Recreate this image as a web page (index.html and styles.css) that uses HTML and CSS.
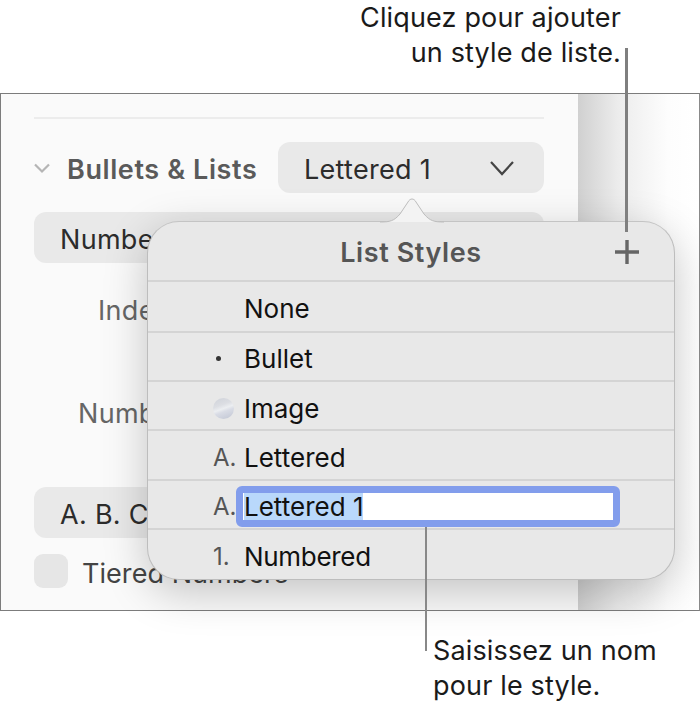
FILE: index.html
```html
<!DOCTYPE html>
<html lang="fr">
<head>
<meta charset="utf-8">
<title>List Styles</title>
<link rel="stylesheet" href="styles.css">
</head>
<body>
<div class="stage">
  <div class="top-caption">Cliquez pour ajouter<br>un style de liste.</div>
  <div class="window">
    <div class="panel">
      <div class="divider"></div>
      <div class="section-row">
        <svg class="disclosure" width="18" height="12" viewBox="0 0 18 12"><path d="M2 2.5 9 9.5 16 2.5" fill="none" stroke="#b5b5b5" stroke-width="2.2"/></svg>
        <span class="section-title">Bullets &amp; Lists</span>
        <div class="select style-select">
          <span>Lettered 1</span>
          <svg width="26" height="16" viewBox="0 0 26 16"><path d="M2 2 13 14 24 2" fill="none" stroke="#444" stroke-width="2.2"/></svg>
        </div>
      </div>
      <div class="select wide number-select"><span>Numbers</span></div>
      <div class="label indent-label">Indent</div>
      <div class="label number-label">Number</div>
      <div class="select wide format-select"><span>A. B. C.</span></div>
      <div class="check-row">
        <span class="checkbox"></span>
        <span class="check-text">Tiered Numbers</span>
      </div>
    </div>
    <div class="backdrop"></div>
  </div>
  <div class="bottom-caption">Saisissez un nom<br>pour le style.</div>

  <div class="popover">
    <svg class="arrow" width="64" height="26" viewBox="0 0 64 26"><path d="M0 25C10 25 14 24 20 17L28 5C30 1 34 1 36 5L44 17C50 24 54 25 64 25" fill="#f3f3f3" stroke="#bdbdbd" stroke-width="1"/></svg>
    <div class="pop-head">
      <span class="pop-title">List Styles</span>
      <svg class="plus" width="26" height="26" viewBox="0 0 26 26"><path d="M13 1V25M1 13H25" stroke="#666" stroke-width="3.4"/></svg>
    </div>
    <div class="pop-row first"><span class="mark"></span><span class="name">None</span></div>
    <div class="pop-row"><span class="mark"><span class="dot"></span></span><span class="name">Bullet</span></div>
    <div class="pop-row"><span class="mark"><span class="ball"></span></span><span class="name">Image</span></div>
    <div class="pop-row"><span class="mark">A.</span><span class="name">Lettered</span></div>
    <div class="pop-row"><span class="mark">A.</span><div class="field"><span class="selected">Lettered 1</span></div></div>
    <div class="pop-row"><span class="mark">1.</span><span class="name tight">Numbered</span></div>
  </div>
  <div class="leader leader-top"></div>
  <div class="leader leader-bottom"></div>
</div>
</body>
</html>
```
FILE: styles.css
```css
* { box-sizing: border-box; }
html, body { margin: 0; padding: 0; background: #fff; }
body { font-family: Inter, "Liberation Sans", sans-serif; color: #1d1d1f; }
.stage { position: relative; width: 700px; height: 702px; overflow: hidden; }

.top-caption { height: 93px; padding: 0 79px 0 0; text-align: right; font-size: 27px; line-height: 35px; color: #1a1a1a; letter-spacing: 0.15px; }
.bottom-caption { padding: 22px 0 0 433px; font-size: 27px; line-height: 35px; color: #1a1a1a; letter-spacing: 0.15px; }

.window { display: flex; height: 518px; border: 1px solid #7c7c7c; border-right-color: #8a8a8a; }
.panel { width: 577px; background: #fafafa; padding: 23px 34px 0 33px; }
.backdrop { flex: 1; background: linear-gradient(90deg, #d0d0d0 0, #ececec 40px, #fdfdfd 90px, #fff 100%); }

.divider { height: 2px; background: #ececec; }
.section-row { display: flex; align-items: center; margin-top: 23px; height: 51px; }
.disclosure { margin-left: -1px; flex: none; }
.section-title { margin-left: 16px; padding-top: 3px; font-size: 27px; font-weight: 600; color: #5a5a5a; white-space: nowrap; letter-spacing: 0.6px; }
.select { display: flex; align-items: center; background: #e9e9e9; border-radius: 12px; height: 51px; font-size: 27px; letter-spacing: 0.3px; color: #2c2c2c; }
.select span { padding-top: 3px; }
.style-select { margin-left: auto; width: 266px; padding: 0 29px 0 26px; justify-content: space-between; }
.wide { width: 510px; padding-left: 26px; }
.number-select { margin-top: 19px; }
.label { font-size: 27px; letter-spacing: 0.3px; color: #666; line-height: 30px; }
.indent-label { margin: 33px 0 0 64px; }
.number-label { margin: 73px 0 0 44px; }
.format-select { margin-top: 58px; }
.check-row { display: flex; align-items: center; margin-top: 16px; }
.checkbox { width: 34px; height: 34px; border-radius: 9px; background: #e6e6e6; flex: none; }
.check-text { margin-left: 14px; font-size: 27px; letter-spacing: 0.05px; color: #444; position: relative; top: 2px; }

.popover { position: absolute; left: 147px; top: 221px; width: 528px; height: 359px; background: #e8e8e8; border: 1px solid #bdbdbd; border-top-color: #c4c4c4; border-radius: 32px; box-shadow: 0 12px 44px rgba(0,0,0,.22); }
.arrow { position: absolute; left: 232px; top: -25px; }
.pop-head { position: relative; display: flex; align-items: center; justify-content: center; height: 58px; padding-top: 3px; }
.pop-title { font-size: 27px; font-weight: 600; color: #555; letter-spacing: 0.6px; }
.plus { position: absolute; left: 466px; top: 17px; }
.pop-row { display: flex; align-items: center; height: 49.4px; border-top: 2px solid #d4d4d4; font-size: 26px; color: #111; padding-top: 5px; }
.first { height: 50.6px; }
.tight { letter-spacing: -0.3px; }
.mark { width: 96px; padding-left: 65px; flex: none; font-size: 24px; color: #555; display: flex; align-items: center; }
.dot { width: 5px; height: 5px; border-radius: 50%; background: #333; margin-left: 3px; }
.ball { width: 21px; height: 21px; border-radius: 50%; background: linear-gradient(160deg, #cfd2d9 0, #dcdee3 35%, #eceef1 50%, #d9dce5 62%, #c0c5d3 100%); }
.field { width: 384px; height: 41px; margin-left: -8px; margin-top: 0; background: #fff; border: 7px solid #829dec; border-radius: 6px; display: flex; align-items: center; padding-left: 1px; }
.selected { background: #b9d8fb; color: #111; line-height: 27px; white-space: nowrap; }

.leader { position: absolute; background: #7f7f7f; }
.leader-top { left: 625px; top: 48px; width: 3px; height: 184px; }
.leader-bottom { left: 425px; top: 527px; width: 2px; height: 124px; background: #888; }
```
